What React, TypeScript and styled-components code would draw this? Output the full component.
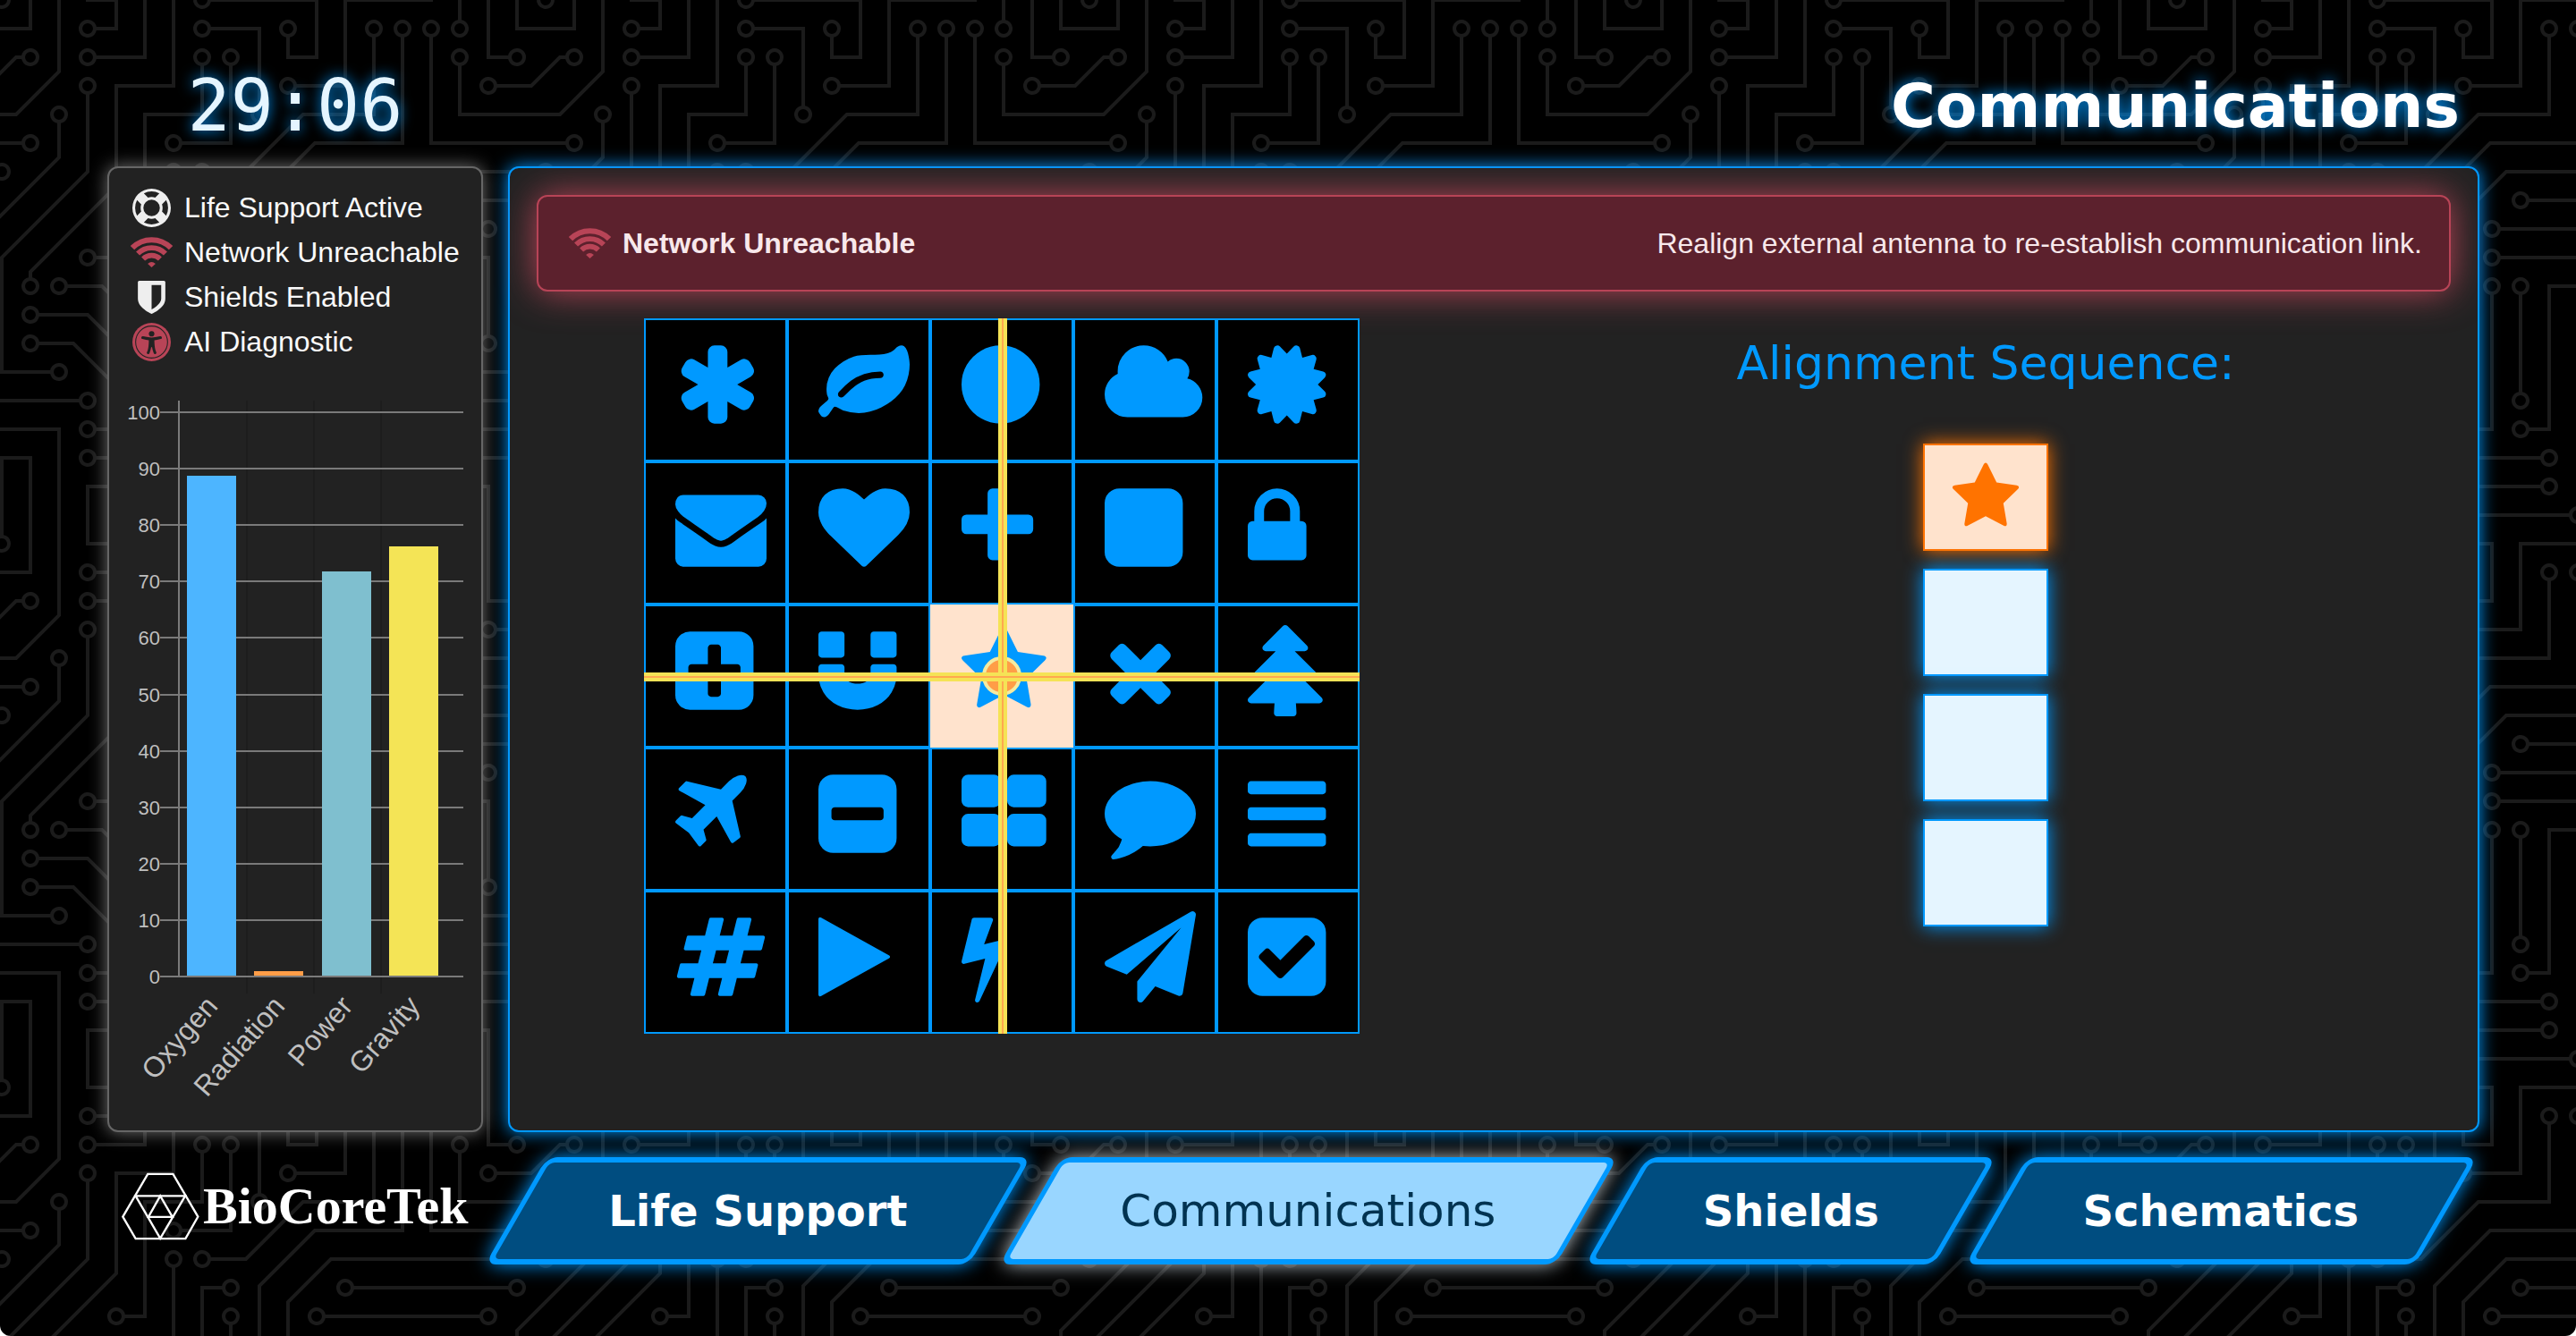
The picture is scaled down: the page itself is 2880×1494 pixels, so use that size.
import React, { useState } from "react";
import styled, { createGlobalStyle, css } from "styled-components";

const BLUE = "#0099ff";
const RED = "#b84457";
const SANS = '"Liberation Sans", Arial, sans-serif';
const DISPLAY = '"DejaVu Sans", sans-serif';

/* ---------- circuit board backdrop ---------- */

const TRACES =
  "M44.1 224a5 5 0 1 1 0 2H0v-2h44.1zm160 48a5 5 0 1 1 0 2H82v-2h122.1zm57.8-46a5 5 0 1 1 0-2H304v2h-42.1zm0 16a5 5 0 1 1 0-2H304v2h-42.1zm6.2-114a5 5 0 1 1 0 2h-86.2a5 5 0 1 1 0-2h86.2zm-256-48a5 5 0 1 1 0 2H0v-2h12.1zm185.8 34a5 5 0 1 1 0-2h86.2a5 5 0 1 1 0 2h-86.2zM258 12.1a5 5 0 1 1-2 0V0h2v12.1zm-64 208a5 5 0 1 1-2 0v-54.2a5 5 0 1 1 2 0v54.2zm48-198.2V80h62v2h-64V21.9a5 5 0 1 1 2 0zm16 16V64h46v2h-48V37.9a5 5 0 1 1 2 0zm-128 96V208h16v12.1a5 5 0 1 1-2 0V210h-16v-76.1a5 5 0 1 1 2 0zm-5.9-21.9a5 5 0 1 1 0 2H114v48H85.9a5 5 0 1 1 0-2H112v-48h12.1zm-6.2 130a5 5 0 1 1 0-2H176v-74.1a5 5 0 1 1 2 0V242h-60.1zm-16-64a5 5 0 1 1 0-2H114v48h10.1a5 5 0 1 1 0 2H112v-48h-10.1zM66 284.1a5 5 0 1 1-2 0V274H50v30h-2v-32h18v12.1zM236.1 176a5 5 0 1 1 0 2H226v94h48v32h-2v-30h-48v-98h12.1zm25.8-30a5 5 0 1 1 0-2H274v44.1a5 5 0 1 1-2 0V146h-10.1zm-64 96a5 5 0 1 1 0-2H208v-80h16v-14h-42.1a5 5 0 1 1 0-2H226v18h-16v80h-12.1zm86.2-210a5 5 0 1 1 0 2H272V0h2v32h10.1zM98 101.9V146H53.9a5 5 0 1 1 0-2H96v-42.1a5 5 0 1 1 2 0zM53.9 34a5 5 0 1 1 0-2H80V0h2v34H53.9zm60.1 3.9V66H82v64H69.9a5 5 0 1 1 0-2H80V64h32V37.9a5 5 0 1 1 2 0zM101.9 82a5 5 0 1 1 0-2H128V37.9a5 5 0 1 1 2 0V82h-28.1zm16-64a5 5 0 1 1 0-2H146v44.1a5 5 0 1 1-2 0V18h-26.1zm102.2 270a5 5 0 1 1 0 2H98v14h-2v-16h124.1zM242 149.9V160h16v34h-16v62h48v48h-2v-46h-48v-66h16v-30h-16v-12.1a5 5 0 1 1 2 0zM53.9 18a5 5 0 1 1 0-2H64V2H48V0h18v18H53.9zm112 32a5 5 0 1 1 0-2H192V0h50v2h-48v48h-28.1zm-48-48a5 5 0 0 1-9.8-2h2.07a3 3 0 1 0 5.66 0H178v34h-18V21.9a5 5 0 1 1 2 0V32h14V2h-58.1zm0 96a5 5 0 1 1 0-2H137l32-32h39V21.9a5 5 0 1 1 2 0V66h-40.17l-32 32H117.9zm28.1 90.1a5 5 0 1 1-2 0v-76.51L175.59 80H224V21.9a5 5 0 1 1 2 0V82h-49.59L146 112.41v75.69zm16 32a5 5 0 1 1-2 0v-99.51L184.59 96H300.1a5 5 0 0 1 3.9-3.9v2.07a3 3 0 0 0 0 5.66v2.07a5 5 0 0 1-3.9-3.9H185.41L162 121.41v98.69zm-144-64a5 5 0 1 1-2 0v-3.51l48-48V48h32V0h2v50H66v55.41l-48 48v2.69zM50 53.9v43.51l-48 48V208h26.1a5 5 0 1 1 0 2H0v-65.41l48-48V53.9a5 5 0 1 1 2 0zm-16 16V89.41l-34 34v-2.82l32-32V69.9a5 5 0 1 1 2 0zM12.1 32a5 5 0 1 1 0 2H9.41L0 43.41V40.6L8.59 32h3.51zm265.8 18a5 5 0 1 1 0-2h18.69l7.41-7.41v2.82L297.41 50H277.9zm-16 160a5 5 0 1 1 0-2H288v-71.41l16-16v2.82l-14 14V210h-28.1zm-208 32a5 5 0 1 1 0-2H64v-22.59L40.59 194H21.9a5 5 0 1 1 0-2H41.41L66 216.59V242H53.9zm150.2 14a5 5 0 1 1 0 2H96v-56.6L56.6 162H37.9a5 5 0 1 1 0-2h19.5L98 200.6V256h106.1zm-150.2 2a5 5 0 1 1 0-2H80v-46.59L48.59 178H21.9a5 5 0 1 1 0-2H49.41L82 208.59V258H53.9zM34 39.8v1.61L9.41 66H0v-2h8.59L32 40.59V0h2v39.8zM2 300.1a5 5 0 0 1 3.9 3.9H3.83A3 3 0 0 0 0 302.17V256h18v48h-2v-46H2v42.1zM34 241v63h-2v-62H0v-2h34v1zM17 18H0v-2h16V0h2v18h-1zm273-2h14v2h-16V0h2v16zm-32 273v15h-2v-14h-14v14h-2v-16h18v1zM0 92.1A5.02 5.02 0 0 1 6 97a5 5 0 0 1-6 4.9v-2.07a3 3 0 1 0 0-5.66V92.1zM80 272h2v32h-2v-32zm37.9 32h-2.07a3 3 0 0 0-5.66 0h-2.07a5 5 0 0 1 9.8 0zM5.9 0A5.02 5.02 0 0 1 0 5.9V3.83A3 3 0 0 0 3.83 0H5.9zm294.2 0h2.07A3 3 0 0 0 304 3.83V5.9a5 5 0 0 1-3.9-5.9zm3.9 300.1v2.07a3 3 0 0 0-1.83 1.83h-2.07a5 5 0 0 1 3.9-3.9z";

const VIAS: [number, number][] = [
  [49, 225], [209, 273], [257, 225], [257, 241], [273, 129], [177, 129], [17, 81], [193, 113], [289, 113],
  [257, 17], [193, 225], [193, 161], [241, 17], [257, 33], [129, 129], [145, 225], [129, 113], [81, 161],
  [113, 241], [177, 161], [97, 177], [129, 225], [65, 289], [241, 177], [257, 145], [273, 193], [193, 241],
  [177, 145], [289, 33], [97, 97], [49, 145], [49, 33], [113, 33], [65, 129], [97, 81], [129, 33], [113, 17],
  [145, 65], [225, 289], [241, 145], [49, 17], [161, 49], [161, 17], [113, 97], [209, 17], [145, 193],
  [225, 17], [161, 225], [17, 161], [49, 49], [33, 209], [33, 65], [17, 33], [273, 49], [257, 209], [49, 241],
  [17, 193], [209, 257], [33, 161], [49, 257], [17, 177],
];

const holes = VIAS.map(([x, y]) => `M${x} ${y + 3}a3 3 0 1 0 0-6 3 3 0 0 0 0 6z`).join("");
const tile = encodeURIComponent(
  `<svg xmlns="http://www.w3.org/2000/svg" width="304" height="304" viewBox="0 0 304 304"><path fill="#1b1b1b" d="${TRACES}${holes}"/></svg>`
);

/* ---------- icon outlines, drawn on a 1792 unit em ---------- */

const BOX =
  "M1664 416v960q0 119-84.5 203.5t-203.5 84.5h-960q-119 0-203.5-84.5t-84.5-203.5v-960q0-119 84.5-203.5t203.5-84.5h960q119 0 203.5 84.5t84.5 203.5z";

type Glyph = { name: string; left: number; d: string };

const STAR: Glyph = {
  name: "Star",
  left: 64,
  d: "M1728 647q0 22-26 48l-363 354 86 500q1 7 1 20 0 21-10.5 35.5t-30.5 14.5q-19 0-40-12l-449-236-449 236q-22 12-40 12-21 0-31.5-14.5t-10.5-35.5q0-6 2-20l86-500-364-354q-25-27-25-48 0-37 56-46l502-73 225-455q19-41 49-41t49 41l225 455 502 73q56 9 56 46z",
};

const GLYPHS: Glyph[] = [
  {
    name: "Asterisk",
    left: 64,
    d: "M1546 1050q46 26 59.5 77.5t-12.5 97.5l-64 110q-26 46-77.5 59.5t-97.5-12.5l-266-153v307q0 52-38 90t-90 38h-128q-52 0-90-38t-38-90v-307l-266 153q-46 26-97.5 12.5t-77.5-59.5l-64-110q-26-46-12.5-97.5t59.5-77.5l266-154-266-154q-46-26-59.5-77.5t12.5-97.5l64-110q26-46 77.5-59.5t97.5 12.5l266 153v-307q0-52 38-90t90-38h128q52 0 90 38t38 90v307l266-153q46-26 97.5-12.5t77.5 59.5l64 110q26 46 12.5 97.5t-59.5 77.5l-266 154z",
  },
  {
    name: "Leaf",
    left: 0,
    d: "M1280 704q0-26-19-45t-45-19q-172 0-318 49.5t-259.5 134-235.5 219.5q-19 21-19 45 0 26 19 45t45 19q24 0 45-19 27-24 74-71t67-66q137-124 268.5-176t313.5-52q26 0 45-19t19-45zm512-198q0 95-20 193-46 224-184.5 383t-357.5 268q-214 108-438 108-148 0-286-47-15-5-88-42t-96-37q-16 0-39.5 32t-45 70-52.5 70-60 32q-43 0-63.5-17.5t-45.5-59.5q-2-4-6-11t-5.5-10-3-9.5-1.5-13.5q0-35 31-73.5t68-65.5 68-56 31-48q0-4-14-38t-16-44q-9-51-9-104 0-115 43.5-220t119-184.5 170.5-139 204-95.5q55-18 145-25.5t179.5-9 178.5-6 163.5-24 113.5-56.5l29.5-29.5 29.5-28 27-20 36.5-16 43.5-4.5q39 0 70.5 46t47.5 112 24 124 8 96z",
  },
  {
    name: "Circle",
    left: 128,
    d: "M1664 896q0 209-103 385.5t-279.5 279.5-385.5 103-385.5-103-279.5-279.5-103-385.5 103-385.5 279.5-279.5 385.5-103 385.5 103 279.5 279.5 103 385.5z",
  },
  {
    name: "Cloud",
    left: 64,
    d: "M1984 1152q0 159-112.5 271.5t-271.5 112.5h-1088q-185 0-316.5-131.5t-131.5-316.5q0-132 71-241.5t187-163.5q-2-28-2-43 0-212 150-362t362-150q158 0 286.5 88t187.5 230q70-62 166-62 106 0 181 75t75 181q0 75-41 138 129 30 213 134.5t84 239.5z",
  },
  {
    name: "Certificate",
    left: 128,
    d: "M1504 896l138 135q30 28 20 70-12 41-52 51l-188 48 53 186q12 41-19 70-29 31-70 19l-186-53-48 188q-10 40-51 52-12 2-19 2-31 0-51-22l-135-138-135 138q-28 30-70 20-41-11-51-52l-48-188-186 53q-41 12-70-19-31-29-19-70l53-186-188-48q-40-10-52-51-10-42 20-70l138-135-138-135q-30-28-20-70 12-41 52-51l188-48-53-186q-12-41 19-70 29-31 70-19l186 53 48-188q10-41 51-51 41-12 70 19l135 139 135-139q29-30 70-19 41 10 51 51l48 188 186-53q41-12 70 19 31 29 19 70l-53 186 188 48q40 10 52 51 10 42-20 70z",
  },
  {
    name: "Envelope",
    left: 0,
    d: "M1792 710v794q0 66-47 113t-113 47h-1472q-66 0-113-47t-47-113v-794q44 49 101 87 362 246 497 345 57 42 92.5 65.5t94.5 48 110 24.5h2q51 0 110-24.5t94.5-48 92.5-65.5q170-123 498-345 57-39 100-87zm0-294q0 79-49 151t-122 123q-376 261-468 325-10 7-42.5 31t-54 38.5-52 32.5-57.5 27-50 9h-2q-23 0-50-9t-57.5-27-52-32.5-54-38.5-42.5-31q-91-64-262-182.5t-205-142.5q-62-42-117-115.5t-55-136.5q0-78 41.5-130t118.5-52h1472q65 0 112.5 47t47.5 113z",
  },
  {
    name: "Heart",
    left: 0,
    d: "M896 1664q-26 0-44-18l-624-602q-10-8-27.5-26t-55.5-65.5-68-97.5-53.5-121-23.5-138q0-220 127-344t351-124q62 0 126.5 21.5t120 58 95.5 68.5 76 68q36-36 76-68t95.5-68.5 120-58 126.5-21.5q224 0 351 124t127 344q0 221-229 450l-623 600q-18 18-44 18z",
  },
  {
    name: "Plus",
    left: 192,
    d: "M1600 736v192q0 40-28 68t-68 28h-416v416q0 40-28 68t-68 28h-192q-40 0-68-28t-28-68v-416h-416q-40 0-68-28t-28-68v-192q0-40 28-68t68-28h416v-416q0-40 28-68t68-28h192q40 0 68 28t28 68v416h416q40 0 68 28t28 68z",
  },
  { name: "Square", left: 128, d: BOX },
  {
    name: "Lock",
    left: 320,
    d: "M640 768h512v-192q0-106-75-181t-181-75-181 75-75 181v192zm832 96v576q0 40-28 68t-68 28h-960q-40 0-68-28t-28-68v-576q0-40 28-68t68-28h32v-192q0-184 132-316t316-132 316 132 132 316v192h32q40 0 68 28t28 68z",
  },
  {
    name: "Plus square",
    left: 128,
    d:
      "M1408 960v-128q0-26-19-45t-45-19h-320v-320q0-26-19-45t-45-19h-128q-26 0-45 19t-19 45v320h-320q-26 0-45 19t-19 45v128q0 26 19 45t45 19h320v320q0 26 19 45t45 19h128q26 0 45-19t19-45v-320h320q26 0 45-19t19-45z" +
      BOX,
  },
  {
    name: "Magnet",
    left: 128,
    d: "M1664 832v128q0 201-98.5 362t-274 251.5-395.5 90.5-395.5-90.5-274-251.5-98.5-362v-128q0-26 19-45t45-19h384q26 0 45 19t19 45v128q0 52 23.5 90t53.5 57 71 30 64 13 44 2 44-2 64-13 71-30 53.5-57 23.5-90v-128q0-26 19-45t45-19h384q26 0 45 19t19 45zm-1024-640v384q0 26-19 45t-45 19h-384q-26 0-45-19t-19-45v-384q0-26 19-45t45-19h384q26 0 45 19t19 45zm1024 0v384q0 26-19 45t-45 19h-384q-26 0-45-19t-19-45v-384q0-26 19-45t45-19h384q26 0 45 19t19 45z",
  },
  STAR,
  {
    name: "Times",
    left: 192,
    d: "M1490 1322q0 40-28 68l-136 136q-28 28-68 28t-68-28l-294-294-294 294q-28 28-68 28t-68-28l-136-136q-28-28-28-68t28-68l294-294-294-294q-28-28-28-68t28-68l136-136q28-28 68-28t68 28l294 294 294-294q28-28 68-28t68 28l136 136q28 28 28 68t-28 68l-294 294 294 294q28 28 28 68z",
  },
  {
    name: "Tree",
    left: 128,
    d: "M1600 1472q0 26-19 45t-45 19h-462q1 17 6 87.5t5 108.5q0 25-18 42.5t-43 17.5h-320q-25 0-43-17.5t-18-42.5q0-38 5-108.5t6-87.5h-462q-26 0-45-19t-19-45 19-45l402-403h-229q-26 0-45-19t-19-45 19-45l402-403h-197q-26 0-45-19t-19-45 19-45l384-384q19-19 45-19t45 19l384 384q19 19 19 45t-19 45-45 19h-197l402 403q19 19 19 45t-19 45-45 19h-229l402 403q19 19 19 45z",
  },
  {
    name: "Plane",
    left: 192,
    d: "M1568 160q44 52 12 148t-108 172l-161 161 160 696q5 19-12 33l-128 96q-7 6-19 6-4 0-7-1-15-3-21-16l-279-508-259 259 53 194q5 17-8 31l-96 96q-9 9-23 9h-2q-15-2-24-13l-189-252-252-189q-11-7-13-23-1-13 9-25l96-97q9-9 23-9 6 0 8 1l194 53 259-259-508-279q-14-8-17-24-2-16 9-27l128-128q14-13 30-8l665 159 160-160q76-76 172-108t148 12z",
  },
  {
    name: "Minus square",
    left: 128,
    d: "M1408 960v-128q0-26-19-45t-45-19h-896q-26 0-45 19t-19 45v128q0 26 19 45t45 19h896q26 0 45-19t19-45z" + BOX,
  },
  {
    name: "Large tiles",
    left: 64,
    d: "M832 1024v384q0 52-38 90t-90 38h-512q-52 0-90-38t-38-90v-384q0-52 38-90t90-38h512q52 0 90 38t38 90zm0-768v384q0 52-38 90t-90 38h-512q-52 0-90-38t-38-90v-384q0-52 38-90t90-38h512q52 0 90 38t38 90zm896 768v384q0 52-38 90t-90 38h-512q-52 0-90-38t-38-90v-384q0-52 38-90t90-38h512q52 0 90 38t38 90zm0-768v384q0 52-38 90t-90 38h-512q-52 0-90-38t-38-90v-384q0-52 38-90t90-38h512q52 0 90 38t38 90z",
  },
  {
    name: "Comment",
    left: 0,
    d: "M1792 896q0 174-120 321.5t-326 233-450 85.5q-70 0-145-8-198 175-460 242-49 14-114 22-17 2-30.5-9t-17.5-29v-1q-3-4-.5-12t2-10 4.5-9.5l6-9 7-8.5 8-9q7-8 31-34.5t34.5-38 31-39.5 32.5-51 27-59 26-76q-157-89-247.5-220t-90.5-281q0-130 71-248.5t191-204.5 286-136.5 348-50.5q244 0 450 85.5t326 233 120 321.5z",
  },
  {
    name: "Bars",
    left: 128,
    d: "M1664 1344v128q0 26-19 45t-45 19h-1408q-26 0-45-19t-19-45v-128q0-26 19-45t45-19h1408q26 0 45 19t19 45zm0-512v128q0 26-19 45t-45 19h-1408q-26 0-45-19t-19-45v-128q0-26 19-45t45-19h1408q26 0 45 19t19 45zm0-512v128q0 26-19 45t-45 19h-1408q-26 0-45-19t-19-45v-128q0-26 19-45t45-19h1408q26 0 45 19t19 45z",
  },
  {
    name: "Hash",
    left: 0,
    d: "M991 1024l64-256h-254l-64 256h254zm768-504l-56 224q-7 24-31 24h-327l-64 256h311q15 0 25 12 10 14 6 28l-56 224q-5 24-31 24h-327l-81 328q-7 24-31 24h-224q-16 0-26-12-9-12-6-28l78-312h-254l-81 328q-7 24-31 24h-225q-15 0-25-12-9-12-6-28l78-312h-311q-15 0-25-12-9-12-6-28l56-224q7-24 31-24h327l64-256h-311q-15 0-25-12-10-14-6-28l56-224q5-24 31-24h327l81-328q7-24 32-24h224q15 0 25 12 9 12 6 28l-78 312h254l81-328q7-24 32-24h224q15 0 25 12 9 12 6 28l-78 312h311q15 0 25 12 9 12 6 28z",
  },
  {
    name: "Play",
    left: 192,
    d: "M1576 927l-1328 738q-23 13-39.5 3t-16.5-36v-1472q0-26 16.5-36t39.5 3l1328 738q23 13 23 31t-23 31z",
  },
  {
    name: "Bolt",
    left: 448,
    d: "M1333 566q18 20 7 44l-540 1157q-13 25-42 25-4 0-14-2-17-5-25.5-19t-4.5-30l197-808-406 101q-4 1-12 1-18 0-31-11-18-15-13-39l201-825q4-14 16-23t28-9h328q19 0 32 12.5t13 29.5q0 8-5 18l-171 463 396-98q8-2 12-2 19 0 34 15z",
  },
  {
    name: "Paper plane",
    left: 0,
    d: "M1764 11q33 24 27 64l-256 1536q-5 29-32 45-14 8-31 8-11 0-24-5l-453-185-242 295q-18 23-49 23-13 0-22-4-19-7-30.5-23.5t-11.5-36.5v-349l864-1059-1069 925-395-162q-37-14-40-55-2-40 32-59l1664-960q15-9 32-9 20 0 36 11z",
  },
  {
    name: "Check square",
    left: 128,
    d:
      "M813 1299l614-614q19-19 19-45t-19-45l-102-102q-19-19-45-19t-45 19l-467 467-211-211q-19-19-45-19t-45 19l-102 102q-19 19-19 45t19 45l358 358q19 19 45 19t45-19z" +
      BOX,
  },
];

const LIFE_RING =
  "M896 0q182 0 348 71t286 191 191 286 71 348-71 348-191 286-286 191-348 71-348-71-286-191-191-286-71-348 71-348 191-286 286-191 348-71zm0 128q-190 0-361 90l194 194q82-28 167-28t167 28l194-194q-171-90-361-90zm-678 1129l194-194q-28-82-28-167t28-167l-194-194q-90 171-90 361t90 361zm678 407q190 0 361-90l-194-194q-82 28-167 28t-167-28l-194 194q171 90 361 90zm0-384q159 0 271.5-112.5t112.5-271.5-112.5-271.5-271.5-112.5-271.5 112.5-112.5 271.5 112.5 271.5 271.5 112.5zm484-217l194 194q90-171 90-361t-90-361l-194 194q28 82 28 167t-28 167z";
const SHIELD =
  "M1344 960v-640h-448v1137q119-63 213-137 235-184 235-360zm192-768v768q0 86-33.5 170.5t-83 150-118 127.5-126.5 103-121 77.5-89.5 49.5-42.5 20q-12 6-26 6t-26-6q-16-7-42.5-20t-89.5-49.5-121-77.5-126.5-103-118-127.5-83-150-33.5-170.5v-768q0-26 19-45t45-19h1152q26 0 45 19t19 45z";
const PERSON =
  "M1374 677q-6-26-28.5-39.5t-48.5-7.5q-261 62-401 62t-401-62q-26-6-48.5 7.5t-28.5 39.5 7.5 48.5 39.5 28.5q194 46 303 58-2 158-15.5 269t-26.5 155.5-41 115.5l-9 21q-10 25 1 49t36 34q9 4 23 4 44 0 60-41l8-20q54-139 71-259h42q17 120 71 259l8 20q16 41 60 41 14 0 23-4 25-10 36-34t1-49l-9-21q-28-71-41-115.5t-26.5-155.5-15.5-269q109-12 303-58 26-6 39.5-28.5t7.5-48.5z";

/* ---------- styled parts ---------- */

const GlobalStyle = createGlobalStyle`
  *, *::before, *::after { box-sizing: border-box; }
  html { background: #fff; }
  body { margin: 0; font-family: ${SANS}; font-size: 32px; color: #fafafa; }
  h1, h2, ul { margin: 0; padding: 0; }
  button { font: inherit; color: inherit; border: 0; padding: 0; background: none; cursor: pointer; }
  svg { display: block; flex: none; }
`;

const Page = styled.div`
  display: grid;
  grid-template-columns: 420px minmax(0, 1fr);
  grid-template-rows: auto 1fr auto;
  column-gap: 28px;
  min-height: 100vh;
  padding: 52px 108px 80px 120px;
  border-radius: 0 0 12px 12px;
  background: #000 url("data:image/svg+xml,${tile}") 0 -2px / 608px 608px;
`;

const Timer = styled.div`
  font: 80px/134px "DejaVu Sans Mono", monospace;
  text-align: center;
  color: #e5f5ff;
  text-shadow: 0 0 16px ${BLUE};
`;

const Title = styled.h1`
  padding-right: 22px;
  font: bold 68px/134px ${DISPLAY};
  text-align: right;
  color: #fff;
  text-shadow: 0 0 16px ${BLUE};
`;

const Sidebar = styled.aside`
  display: flex;
  flex-direction: column;
  gap: 18px;
  padding: 19px 0 0;
  border: 2px solid #666;
  border-radius: 12px;
  background: #222;
  box-shadow: 0 0 20px rgba(255, 255, 255, 0.45);
`;

const StatusList = styled.ul`
  padding: 0 20px;
  list-style: none;
`;

const StatusRow = styled.li`
  display: flex;
  align-items: center;
  gap: 9px;
  line-height: 50px;
  white-space: nowrap;
`;

const IconBox = styled.span<{ $alert?: boolean }>`
  display: flex;
  justify-content: center;
  width: 55px;
  color: ${(p) => (p.$alert ? RED : "#eee")};
`;

const ChartSvg = styled.svg`
  width: 100%;
  height: auto;
  font-family: ${SANS};
  fill: #bfbfbf;
`;

const Panel = styled.main`
  display: flex;
  flex-direction: column;
  gap: 30px;
  padding: 30px;
  border: 2px solid ${BLUE};
  border-radius: 12px;
  background: #222;
  box-shadow: 0 0 20px ${BLUE};
`;

const Alert = styled.div`
  display: flex;
  align-items: center;
  gap: 9px;
  padding: 28px 30px;
  border: 2px solid ${RED};
  border-radius: 12px;
  background: #5c212d;
  box-shadow: 0 0 40px ${RED};
  color: #f8e8eb;
  line-height: 48px;
`;

const AlertHint = styled.span`
  margin-left: auto;
`;

const Columns = styled.div`
  display: grid;
  grid-template-columns: 1fr 1fr;
  column-gap: 60px;
  justify-items: center;
  align-items: start;
`;

const Board = styled.div`
  position: relative;
  display: grid;
  grid-template-columns: repeat(5, 160px);
`;

const Cell = styled.button<{ $target: boolean }>`
  height: 160px;
  padding: 21px 0 0 33px;
  border: 2px solid ${(p) => (p.$target ? "#ffe3cd" : BLUE)};
  background: ${(p) => (p.$target ? "#ffe3cd" : "#000")};
  color: ${BLUE};
  display: flex;
  align-items: flex-start;
`;

const hair = (direction: string) =>
  `linear-gradient(${direction}, #f5e356 4px, #ffa850 4px, #ffa850 6px, #f5e356 6px)`;

const Dot = styled.span`
  position: absolute;
  left: 378px;
  top: 378px;
  width: 44px;
  height: 44px;
  border: 4px solid #f5eaa0;
  border-radius: 50%;
  background: #ff9d47;
`;

const VerticalHair = styled.span`
  position: absolute;
  top: 0;
  bottom: 0;
  left: 396px;
  width: 10px;
  background: ${hair("to right")};
`;

const HorizontalHair = styled.span`
  position: absolute;
  left: 0;
  right: 0;
  top: 396px;
  height: 10px;
  background: ${hair("to bottom")};
`;

const Sequence = styled.section`
  display: flex;
  flex-direction: column;
  align-items: center;
  gap: 20px;
`;

const SequenceTitle = styled.h2`
  margin-bottom: 20px;
  font: 52px/100px ${DISPLAY};
  color: ${BLUE};
`;

const Slot = styled.div<{ $active: boolean }>`
  display: flex;
  justify-content: center;
  width: 140px;
  height: 120px;
  padding-top: 18px;
  border: 2px solid;
  ${(p) =>
    p.$active
      ? css`
          border-color: #ff7300;
          background: #ffe3cd;
          color: #ff7300;
          box-shadow: 0 0 20px #ff7300;
        `
      : css`
          border-color: ${BLUE};
          background: #e5f5ff;
          box-shadow: 0 0 20px ${BLUE};
        `}
`;

const Logo = styled.div`
  display: flex;
  align-items: center;
  gap: 4px;
  margin-top: 28px;
  padding: 0 0 10px 16px;
  font: bold 58px/64px "Liberation Serif", serif;
  color: #fff;
`;

const Nav = styled.nav`
  display: grid;
  grid-template-columns: 540fr 621fr 390fr 502fr;
  column-gap: 34px;
  margin: 28px 38px 0 9px;
`;

const Tab = styled.button<{ $active: boolean }>`
  position: relative;
  z-index: 0;
  height: 120px;
  font: ${(p) => (p.$active ? "400 50px" : "bold 48px")} / 120px ${DISPLAY};
  color: ${(p) => (p.$active ? "#003351" : "#fff")};

  &::before {
    content: "";
    position: absolute;
    inset: 0;
    z-index: -1;
    transform: skewX(-30deg);
    border: 6px solid ${BLUE};
    border-radius: 12px;
    background: ${(p) => (p.$active ? "#99d6ff" : "#004d80")};
    box-shadow: 0 0 20px ${(p) => (p.$active ? "rgba(229, 245, 255, 0.8)" : BLUE)};
  }
`;

/* ---------- drawings ---------- */

const Icon = ({ d, left = 0, size }: { d: string; left?: number; size: number }) => (
  <svg width={size} height={size} viewBox={`${left} 0 1792 1792`} overflow="visible" aria-hidden="true">
    <path d={d} fill="currentColor" fillRule="evenodd" />
  </svg>
);

const WifiIcon = () => (
  <svg width={47} height={34} viewBox="0 0 140 101" fill="none" stroke="currentColor" aria-hidden="true">
    <path d="M6 36A90 90 0 0 1 134 36" strokeWidth={18} />
    <path d="M24 55A65 65 0 0 1 116 55" strokeWidth={17} />
    <path d="M42 73A40 40 0 0 1 98 73" strokeWidth={17} />
    <path d="M70 101L57 89Q70 77 83 89z" fill="currentColor" stroke="none" />
  </svg>
);

const AccessIcon = () => (
  <svg width={43} height={43} viewBox="0 0 1792 1792" fill="currentColor" aria-hidden="true">
    <circle cx={896} cy={896} r={896} />
    <circle cx={896} cy={896} r={744} fill="none" stroke="#222" strokeWidth={44} />
    <path d={PERSON} fill="#222" />
    <circle cx={896} cy={512} r={128} fill="#222" />
  </svg>
);

const LogoMark = () => (
  <svg width={87} height={76} viewBox="48 64 262 228" fill="none" stroke="#fff" strokeWidth={7} aria-hidden="true">
    <path d="M136 69H221L305 213L263 287H95L52 213Z" />
    <path d="M95 143H262L178 286Z" />
    <path d="M178 143L138 214H219Z" />
  </svg>
);

const READINGS = [
  { label: "Oxygen", value: 88.7, color: "#4db5ff" },
  { label: "Radiation", value: 1, color: "#ff9d47" },
  { label: "Power", value: 71.8, color: "#7fbfcf" },
  { label: "Gravity", value: 76.3, color: "#f4e456" },
];

const levelY = (value: number) => Math.round(667 - value * 6.31);
const barX = (index: number) => Math.round(87 + index * 75.4);

const LevelsChart = () => (
  <ChartSvg viewBox="0 0 416 830" role="img" aria-label="Ship levels">
    {[154, 229, 304].map((x) => (
      <path key={x} d={`M${x} 23V686`} stroke="#1d1d1d" strokeWidth={2} />
    ))}
    {Array.from({ length: 11 }, (_, i) => i * 10).map((level) => (
      <g key={level}>
        <path d={`M57 ${levelY(level)}H396`} stroke="#7a7a7a" strokeWidth={2} />
        <text x={57} y={levelY(level) + 8} fontSize={22} textAnchor="end">
          {level}
        </text>
      </g>
    ))}
    <path d="M78 23V667" stroke="#7a7a7a" strokeWidth={2} />
    {READINGS.map((r, i) => (
      <g key={r.label}>
        <rect x={barX(i)} y={levelY(r.value)} width={55} height={666 - levelY(r.value)} fill={r.color} />
        <text
          fontSize={32}
          textAnchor="end"
          transform={`translate(${barX(i) + 36} 701) rotate(-49)`}
        >
          {r.label}
        </text>
      </g>
    ))}
  </ChartSvg>
);

const TABS = ["Life Support", "Communications", "Shields", "Schematics"];

export default function App() {
  const [tab, setTab] = useState("Communications");

  return (
    <>
      <GlobalStyle />
      <Page>
        <Timer>29:06</Timer>
        <Title>{tab}</Title>

        <Sidebar>
          <StatusList>
            <StatusRow>
              <IconBox>
                <Icon d={LIFE_RING} size={43} />
              </IconBox>
              Life Support Active
            </StatusRow>
            <StatusRow>
              <IconBox $alert>
                <WifiIcon />
              </IconBox>
              Network Unreachable
            </StatusRow>
            <StatusRow>
              <IconBox>
                <Icon d={SHIELD} size={43} />
              </IconBox>
              Shields Enabled
            </StatusRow>
            <StatusRow>
              <IconBox $alert>
                <AccessIcon />
              </IconBox>
              AI Diagnostic
            </StatusRow>
          </StatusList>
          <LevelsChart />
        </Sidebar>

        <Panel>
          <Alert role="alert">
            <IconBox $alert>
              <WifiIcon />
            </IconBox>
            <strong>Network Unreachable</strong>
            <AlertHint>Realign external antenna to re-establish communication link.</AlertHint>
          </Alert>
          <Columns>
            <Board>
              {GLYPHS.map((g) => (
                <Cell key={g.name} type="button" aria-label={g.name} $target={g === STAR}>
                  <Icon d={g.d} left={g.left} size={102} />
                </Cell>
              ))}
              <Dot />
              <VerticalHair />
              <HorizontalHair />
            </Board>
            <Sequence>
              <SequenceTitle>Alignment Sequence:</SequenceTitle>
              <Slot $active>
                <Icon d={STAR.d} size={80} />
              </Slot>
              <Slot $active={false} />
              <Slot $active={false} />
              <Slot $active={false} />
            </Sequence>
          </Columns>
        </Panel>

        <Logo>
          <LogoMark />
          BioCoreTek
        </Logo>
        <Nav>
          {TABS.map((name) => (
            <Tab key={name} type="button" $active={name === tab} onClick={() => setTab(name)}>
              {name}
            </Tab>
          ))}
        </Nav>
      </Page>
    </>
  );
}
